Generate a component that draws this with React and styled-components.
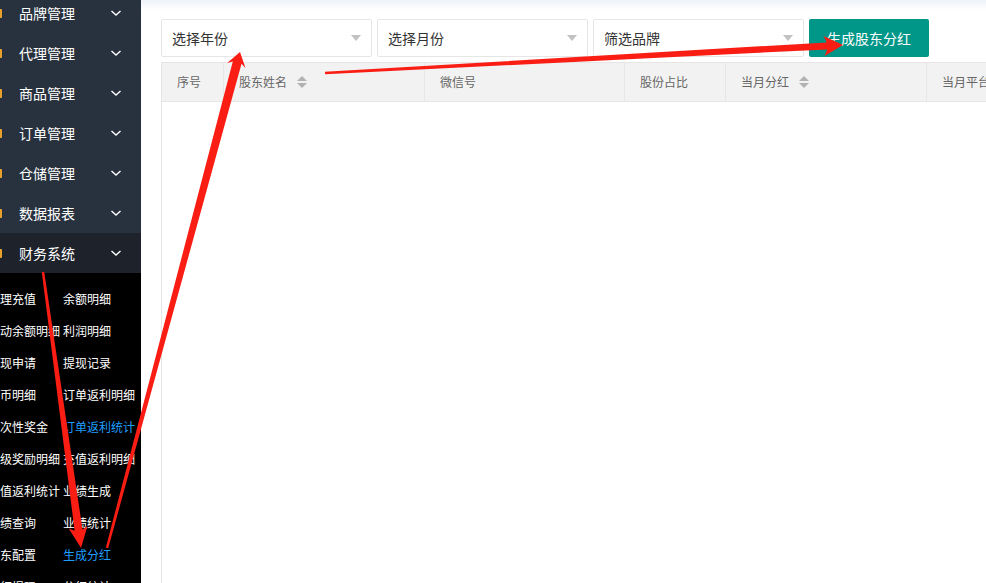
import React from 'react';
import styled, { createGlobalStyle } from 'styled-components';

const GlobalStyle = createGlobalStyle`
  html, body, #root {
    margin: 0;
    padding: 0;
    height: 100%;
  }
  body {
    font-family: "Noto Sans CJK SC", "Noto Sans", "Liberation Sans", sans-serif;
    overflow: hidden;
  }
  * { box-sizing: border-box; }
`;

const Page = styled.div`
  position: relative;
  display: flex;
  width: 100%;
  height: 100vh;
  overflow: hidden;
`;

const Sidebar = styled.aside`
  width: 141px;
  flex: none;
  height: 100%;
  overflow: hidden;
  background: #000;
`;

const Nav = styled.ul`
  list-style: none;
  margin: -7px 0 0 -20px;
  padding: 0;
  width: 161px;
`;

const NavItem = styled.li`
  display: flex;
  align-items: center;
  height: 40px;
  padding: 0 19px 0 9px;
  background: ${(p) => (p.$open ? '#1d222b' : '#28323e')};
  color: #fff;
  font-size: 14px;
`;

const NavIcon = styled.span`
  display: flex;
  width: 14px;
  height: 14px;
  margin-right: 16px;
  color: #e8a22c;
`;

const NavLabel = styled.span`
  flex: 1;
  white-space: nowrap;
`;

const Chevron = styled.svg`
  width: 12px;
  height: 12px;
`;

const SubMenu = styled.div`
  display: grid;
  grid-template-columns: 75px 75px;
  grid-auto-rows: 32px;
  padding: 9px 0 0 8px;
  background: #000;
`;

const SubItem = styled.span`
  display: flex;
  align-items: center;
  white-space: nowrap;
  font-size: 12px;
  color: ${(p) => (p.$active ? '#1e9fff' : '#fff')};
`;

const Main = styled.main`
  flex: 1;
  min-width: 0;
  height: 100%;
  display: flex;
  flex-direction: column;
  padding: 19px 0 0 20px;
  overflow: hidden;
  background: linear-gradient(#edf3fb 0, #fff 10px);
`;

const Toolbar = styled.div`
  display: flex;
  gap: 5px;
  margin-bottom: 5px;
`;

const Select = styled.div`
  display: flex;
  align-items: center;
  width: 211px;
  height: 38px;
  padding: 0 10px;
  border: 1px solid #e6e6e6;
  border-radius: 2px;
  background: #fff;
  color: #333;
  font-size: 14px;
`;

const Caret = styled.i`
  margin-left: auto;
  width: 0;
  height: 0;
  border-left: 5px solid transparent;
  border-right: 5px solid transparent;
  border-top: 6px solid #c2c2c2;
`;

const Button = styled.button`
  width: 120px;
  height: 38px;
  border: none;
  border-radius: 2px;
  background: #009688;
  color: #fff;
  font-family: inherit;
  font-size: 14px;
  padding: 0;
`;

const Table = styled.div`
  flex: 1;
  display: flex;
  flex-direction: column;
  width: 1000px;
  border-left: 1px solid #e6e6e6;
`;

const HeadRow = styled.div`
  display: grid;
  grid-template-columns: 62px 201px 200px 101px 201px 200px;
  height: 40px;
  border-top: 1px solid #e6e6e6;
  border-bottom: 1px solid #e6e6e6;
  background: #f2f2f2;
`;

const HeadCell = styled.div`
  display: flex;
  align-items: center;
  gap: 10px;
  padding: 0 15px 1px;
  border-right: 1px solid #e6e6e6;
  color: #666;
  font-size: 12px;
  white-space: nowrap;
`;

const SortIcon = styled.span`
  display: flex;
  flex-direction: column;
  gap: 2px;
  &::before, &::after {
    content: '';
    width: 0;
    height: 0;
    border-left: 5px solid transparent;
    border-right: 5px solid transparent;
  }
  &::before { border-bottom: 5px solid #b2b2b2; }
  &::after { border-top: 5px solid #b2b2b2; }
`;

const Body = styled.div`
  flex: 1;
  background: #fff;
`;

const Overlay = styled.svg`
  position: absolute;
  left: 0;
  top: 0;
  width: 100%;
  height: 100%;
  pointer-events: none;
`;

const menus = ['品牌管理', '代理管理', '商品管理', '订单管理', '仓储管理', '数据报表'];

const subs = [
  ['代理充值', '余额明细'],
  ['变动余额明细', '利润明细'],
  ['提现申请', '提现记录'],
  ['金币明细', '订单返利明细'],
  ['一次性奖金', '订单返利统计'],
  ['升级奖励明细', '充值返利明细'],
  ['充值返利统计', '业绩生成'],
  ['业绩查询', '业绩统计'],
  ['股东配置', '生成分红'],
  ['分红提现', '分红统计'],
];

const activeSubs = ['订单返利统计', '生成分红'];

const columns = [
  { title: '序号' },
  { title: '股东姓名', sort: true },
  { title: '微信号' },
  { title: '股份占比' },
  { title: '当月分红', sort: true },
  { title: '当月平台分红' },
];

// tapered annotation arrow, tail -> tip
function arrowPoints(x1, y1, x2, y2, tailW, shaftW, headLen, headW) {
  const dx = x2 - x1;
  const dy = y2 - y1;
  const len = Math.sqrt(dx * dx + dy * dy);
  const ux = dx / len;
  const uy = dy / len;
  const nx = -uy;
  const ny = ux;
  const bx = x2 - ux * headLen;
  const by = y2 - uy * headLen;
  const sx = bx + ux * 3;
  const sy = by + uy * 3;
  const pts = [
    [x1 + (nx * tailW) / 2, y1 + (ny * tailW) / 2],
    [sx + (nx * shaftW) / 2, sy + (ny * shaftW) / 2],
    [bx + (nx * headW) / 2, by + (ny * headW) / 2],
    [x2, y2],
    [bx - (nx * headW) / 2, by - (ny * headW) / 2],
    [sx - (nx * shaftW) / 2, sy - (ny * shaftW) / 2],
    [x1 - (nx * tailW) / 2, y1 - (ny * tailW) / 2],
  ];
  return pts.map((p) => p[0].toFixed(1) + ',' + p[1].toFixed(1)).join(' ');
}

function MenuIcon() {
  return (
    <svg viewBox="0 0 14 14" width="14" height="14">
      <rect x="1" y="3" width="12" height="9" rx="1" fill="currentColor" />
    </svg>
  );
}

function ChevronDown() {
  return (
    <Chevron viewBox="0 0 12 12">
      <path d="M1.5 4 L6 8 L10.5 4" fill="none" stroke="#fff" strokeWidth="1.4" />
    </Chevron>
  );
}

export default function App() {
  return (
    <Page>
      <GlobalStyle />
      <Sidebar>
        <Nav>
          {menus.map((m) => (
            <NavItem key={m}>
              <NavIcon><MenuIcon /></NavIcon>
              <NavLabel>{m}</NavLabel>
              <ChevronDown />
            </NavItem>
          ))}
          <NavItem $open>
            <NavIcon><MenuIcon /></NavIcon>
            <NavLabel>财务系统</NavLabel>
            <ChevronDown />
          </NavItem>
          <SubMenu>
            {subs.flat().map((s) => (
              <SubItem key={s} $active={activeSubs.includes(s)}>{s}</SubItem>
            ))}
          </SubMenu>
        </Nav>
      </Sidebar>
      <Main>
        <Toolbar>
          <Select>选择年份<Caret /></Select>
          <Select>选择月份<Caret /></Select>
          <Select>筛选品牌<Caret /></Select>
          <Button>生成股东分红</Button>
        </Toolbar>
        <Table>
          <HeadRow>
            {columns.map((c) => (
              <HeadCell key={c.title}>
                {c.title}
                {c.sort && <SortIcon />}
              </HeadCell>
            ))}
          </HeadRow>
          <Body />
        </Table>
      </Main>
      <Overlay viewBox="0 0 986 583" preserveAspectRatio="none">
        <polygon points={arrowPoints(325, 73, 843, 45, 2.5, 7, 19, 20)} fill="#fa1d14" />
        <polygon points={arrowPoints(43, 272, 81, 548, 2.5, 8, 21, 19)} fill="#fa1d14" />
        <polygon points={arrowPoints(107, 548, 240, 52, 2.5, 9, 14, 19)} fill="#fa1d14" />
      </Overlay>
    </Page>
  );
}
